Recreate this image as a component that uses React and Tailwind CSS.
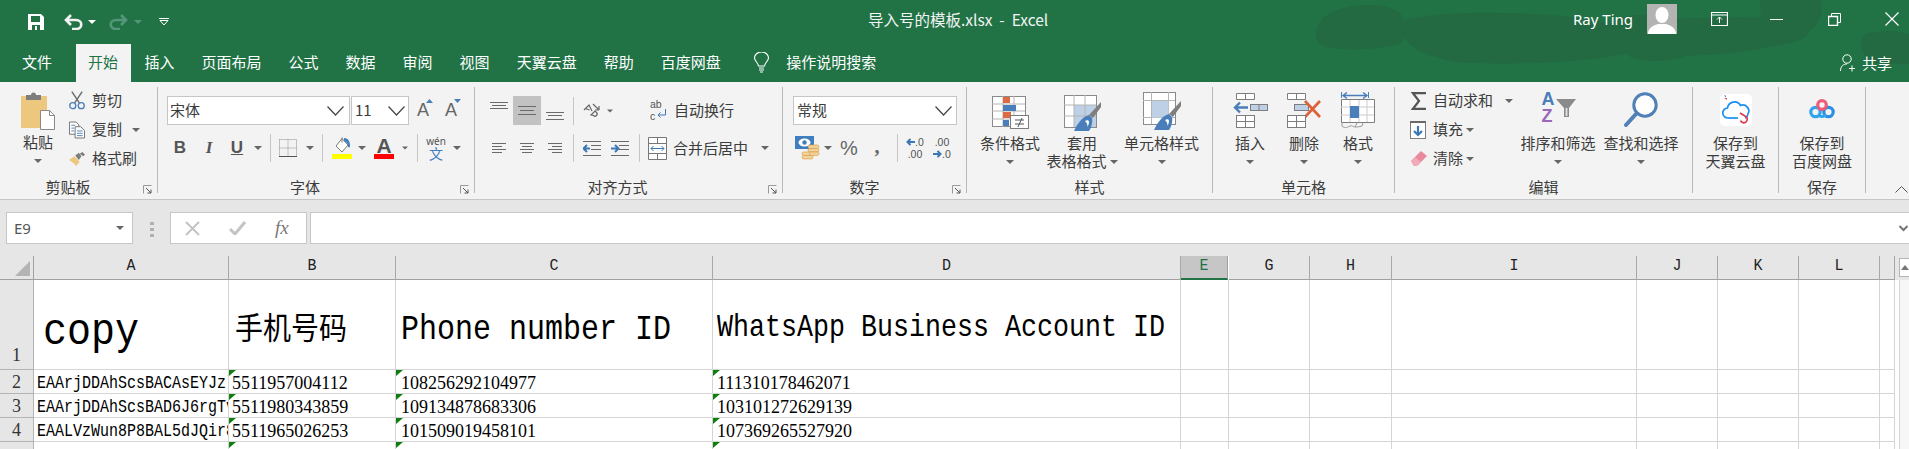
import React from "react";

const Caret = ({ c = "#666666" }) => (
  <svg width="8" height="4" viewBox="0 0 8 4"><path d="M0 0h8L4 4z" fill={c} /></svg>
);
const Chevron = () => (
  <svg width="17" height="10" viewBox="0 0 17 10" fill="none" stroke="#444444" strokeWidth="1.2"><path d="M0.5 0.5L8.5 9L16.5 0.5" /></svg>
);
const Launcher = () => (
  <svg className="absolute right-[5px] bottom-[5px]" width="9" height="9" viewBox="0 0 9 9" fill="none">
    <path d="M0.5 8.5V0.5H8.5" stroke="#9a9a9a" />
    <path d="M3 3L8 8M8 4.5V8H4.5" stroke="#555555" />
  </svg>
);
const VSep = () => <div className="w-px h-[28px] bg-[#c6c6c6]" />;

const Lines = ({ pattern, w = 18 }) => (
  <svg width={w} height="12" viewBox={`0 0 ${w} 12`} stroke="#6a6a6a" strokeWidth="1">
    {pattern.map((p, i) => (
      <line key={i} x1={p[0]} x2={p[1]} y1={p[2] + 0.5} y2={p[2] + 0.5} />
    ))}
  </svg>
);

const Paste = () => (
  <svg width="34" height="38" viewBox="0 0 34 38" className="mt-[10px]">
    <rect x="0" y="4" width="26" height="32" rx="1" fill="#eec77f" />
    <path d="M5 8V3h5a2.5 2.5 0 0 1 5 0h5v5z" fill="#7d7d7d" />
    <path d="M19.5 18.5h9l5 5v14h-14z" fill="#ffffff" stroke="#8a8a8a" />
    <path d="M28.5 18.5v5h5" fill="none" stroke="#8a8a8a" />
  </svg>
);
const Scissors = () => (
  <svg width="17" height="19" viewBox="0 0 17 19" fill="none">
    <path d="M3 0L11 12M14 0L6 12" stroke="#6f6f6f" strokeWidth="1.6" />
    <circle cx="4" cy="15" r="3.2" stroke="#4a7eba" strokeWidth="1.4" />
    <circle cx="13" cy="15" r="3.2" stroke="#4a7eba" strokeWidth="1.4" />
  </svg>
);
const CopyIcon = () => (
  <svg width="17" height="18" viewBox="0 0 17 18" fill="#fff" stroke="#6f6f6f">
    <path d="M0.5 0.5h7l3 3v10h-10z" />
    <path d="M6.5 5.5h6l4 4v8h-10z" />
    <path d="M2.5 4h4M2.5 7h3M2.5 10h3" stroke="#4a7eba" />
    <path d="M8.5 10h6M8.5 12.5h6M8.5 15h6" stroke="#4a7eba" />
  </svg>
);
const Painter = () => (
  <svg width="18" height="16" viewBox="0 0 18 16">
    <path d="M0 9l6-4 6 6-4 5c-2-3-5-5-8-7z" fill="#eec77f" />
    <path d="M7 4l4-3 3 4-3 4z" fill="#7d7d7d" />
    <path d="M12 2l3-2 3 3-2 2z" fill="#7d7d7d" />
  </svg>
);
const Borders = () => (
  <svg width="18" height="18" viewBox="0 0 18 18" fill="none" stroke="#8c8c8c" strokeDasharray="1 1">
    <path d="M0.5 0.5h17v17M0.5 0.5v17M9 0.5v17M0.5 9h17" />
    <path d="M0 17.5h18" stroke="#555555" strokeDasharray="none" />
  </svg>
);
const Bucket = () => (
  <svg width="20" height="17" viewBox="0 0 20 17" fill="none">
    <path d="M4 9L10 1.5L16 8L10 15z" fill="#fff" stroke="#777777" />
    <path d="M10 0.5v5" stroke="#777777" />
    <path d="M12 1c4 0 6 3 6 8 0 2-2 2-2 0 0-3-2-4-4-5z" fill="#3f7fbf" />
  </svg>
);
const Orient = () => (
  <svg width="18" height="18" viewBox="0 0 18 18" fill="none" stroke="#666666" strokeWidth="1.2">
    <path d="M1 8l5-5 3 6M2.5 6.5l4 1.5" />
    <path d="M8 13l4-4 1.5 1.5a2 2 0 0 1-3 3z" />
    <path d="M10 2l6 6M16 8v-4M16 8h-4" />
  </svg>
);
const Indent = ({ flip }) => (
  <svg width="18" height="15" viewBox="0 0 18 15" stroke="#6a6a6a">
    <path d="M0 0.5h18M8 4.5h10M8 8.5h10M0 14.5h18" />
    {flip ? (
      <path d="M0 7.5h7M4 4l3.5 3.5L4 11" stroke="#3c78b5" strokeWidth="2" fill="none" />
    ) : (
      <path d="M7 7.5H1M4 4L0.5 7.5L4 11" stroke="#3c78b5" strokeWidth="2" fill="none" />
    )}
  </svg>
);
const Wrap = () => (
  <div className="relative w-[20px] h-[23px] text-[#555555] text-[10.5px] leading-[11.5px] font-['Liberation_Sans',sans-serif]">
    <div>ab</div>
    <div>c</div>
    <svg className="absolute left-[7px] top-[10px]" width="10" height="10" viewBox="0 0 10 10" fill="none" stroke="#3c78b5"><path d="M8.5 0v6H1M3.5 3.5L1 6l2.5 2.5" /></svg>
  </div>
);
const Merge = () => (
  <svg width="19" height="23" viewBox="0 0 19 23" fill="#fff" stroke="#777777">
    <path d="M0.5 0.5h18v22h-18zM0.5 6.5h18M0.5 16.5h18M9.5 0.5v6M9.5 16.5v6" />
    <path d="M3 11.5h13M5.5 9L3 11.5 5.5 14M13.5 9l2.5 2.5-2.5 2.5" stroke="#3c78b5" fill="none" />
  </svg>
);
const Money = () => (
  <svg width="25" height="24" viewBox="0 0 25 24">
    <rect x="0" y="0" width="19" height="13" fill="#3f7fbf" />
    <ellipse cx="9.5" cy="6.5" rx="6" ry="4" fill="#fff" />
    <circle cx="9.5" cy="6.5" r="2.2" fill="#3f7fbf" />
    <g fill="#f4d39b" stroke="#d8a04f" strokeWidth="0.7">
      <rect x="13" y="9" width="11" height="3.4" rx="1.7" />
      <rect x="13" y="12.5" width="11" height="3.4" rx="1.7" />
      <rect x="13" y="16" width="11" height="3.4" rx="1.7" />
      <rect x="7" y="16" width="8" height="3.4" rx="1.7" />
      <rect x="7" y="19.5" width="11" height="3.4" rx="1.7" />
    </g>
  </svg>
);
const Dec = ({ inc }) => (
  <div className="flex flex-col items-center text-[10.5px] leading-[12px] text-[#555555] font-['Liberation_Sans',sans-serif]">
    {inc ? (
      <>
        <div className="flex items-center"><svg width="9" height="8" viewBox="0 0 9 8"><path d="M9 4H2M4.5 1L1.5 4l3 3" fill="none" stroke="#3c78b5" strokeWidth="2" /></svg>.0</div>
        <div>.00</div>
      </>
    ) : (
      <>
        <div>.00</div>
        <div className="flex items-center"><svg width="9" height="8" viewBox="0 0 9 8"><path d="M0 4h7M4.5 1l3 3-3 3" fill="none" stroke="#3c78b5" strokeWidth="2" /></svg>.0</div>
      </>
    )}
  </div>
);
const CF = () => (
  <svg width="37" height="33" viewBox="0 0 37 33" className="mt-[14px]">
    <rect x="0.5" y="0.5" width="33" height="30" fill="#fff" stroke="#8a8a8a" />
    <path d="M0 8h33M0 15h33M0 23h33M11 0v31M22 0v31" stroke="#b5b5b5" />
    <rect x="11" y="1" width="7" height="6" fill="#dd6a45" />
    <rect x="11" y="9" width="13" height="6" fill="#4a7eba" />
    <rect x="11" y="16" width="8" height="6" fill="#dd6a45" />
    <rect x="11" y="24" width="6" height="6" fill="#4a7eba" />
    <rect x="18.5" y="19.5" width="18" height="13" fill="#fff" stroke="#7d7d7d" />
    <path d="M23 24h9M23 28h9M30 22l-4 9" stroke="#555555" fill="none" />
  </svg>
);
const Brush = () => (
  <>
    <path d="M37 7v5L29 23l-4-3z" fill="#7f7f7f" />
    <path d="M10 36c3-7 8-14 15-16l3 3c1 5-1 10-3 13z" fill="#4a7eba" />
    <path d="M21 26c2-1 4-1 4 1 0 2-1 4-2 5 1-2 0-4-2-6z" fill="#fff" />
  </>
);
const TableFmt = () => (
  <svg width="37" height="36" viewBox="0 0 37 36" className="mt-[13px]">
    <rect x="0.5" y="0.5" width="32" height="32" fill="#fff" stroke="#8a8a8a" />
    <rect x="10" y="10" width="22" height="22" fill="#bdd0e6" />
    <path d="M0 10h32M0 21h32M10 0v32M21 0v32" stroke="#b5b5b5" />
    <Brush />
  </svg>
);
const CellFmt = () => (
  <svg width="38" height="38" viewBox="0 0 38 38" className="mt-[10px]">
    <rect x="0.5" y="0.5" width="32" height="32" fill="#fff" stroke="#8a8a8a" />
    <path d="M0 8.5h32M0 25.5h32M8.5 0v32M25.5 0v32" stroke="#b5b5b5" />
    <rect x="9" y="9" width="16.5" height="16.5" fill="#bdd0e6" />
    <g transform="translate(1 2)"><Brush /></g>
  </svg>
);
const MiniGrid = ({ y }) => (
  <g transform={`translate(3 ${y})`} fill="#fff" stroke="#7d7d7d">
    <rect x="0.5" y="0.5" width="18" height="12" />
    <path d="M0.5 6.5h18M9.5 0.5v12" />
  </g>
);
const Insert = () => (
  <svg width="35" height="35" viewBox="0 0 35 35" className="mt-[11px]">
    <g fill="#fff" stroke="#7d7d7d"><path d="M3.5 0.5h18v6h-18zM12.5 0.5v6" /></g>
    <rect x="17.5" y="11.5" width="17" height="6" fill="#bdd0e6" stroke="#7d7d7d" />
    <path d="M26 11.5v6" stroke="#7d7d7d" />
    <path d="M15 14.5H2M7 9.5l-5 5 5 5" fill="none" stroke="#4a7eba" strokeWidth="2.4" />
    <MiniGrid y={22} />
  </svg>
);
const Delete = () => (
  <svg width="35" height="35" viewBox="0 0 35 35" className="mt-[11px]">
    <g fill="#fff" stroke="#7d7d7d"><path d="M0.5 0.5h18v6h-18zM9.5 0.5v6" /></g>
    <rect x="7.5" y="11.5" width="14" height="6" fill="#bdd0e6" stroke="#7d7d7d" />
    <path d="M18 8l15 16M33 8L18 24" stroke="#dd6238" strokeWidth="2.6" />
    <g transform="translate(-3 0)"><MiniGrid y={22} /></g>
  </svg>
);
const FormatIcon = () => (
  <svg width="34" height="38" viewBox="0 0 34 38" className="mt-[10px]">
    <path d="M2 3.5h24M6 0.5L2 3.5l4 3M22 0.5l4 3-4 3" fill="none" stroke="#4a7eba" strokeWidth="1.4" />
    <path d="M0.5 0v6M27.5 0v6" stroke="#4a7eba" />
    <path d="M0.5 7.5h33v23h-33z" fill="#fff" stroke="#7d7d7d" />
    <path d="M0 15h33M0 23h33M9 8v22M18 8v22M26 8v22" stroke="#cccccc" />
    <rect x="9" y="14" width="9" height="12" fill="#4a7eba" />
    <path d="M1 31v3c3 3 6 1 8 0s3 1 5 1l2-4" fill="none" stroke="#9a9a9a" />
    <path d="M14 35c2 0 4 0 7-1l1-3" fill="none" stroke="#9a9a9a" />
  </svg>
);
const Sigma = () => (
  <svg width="15" height="18" viewBox="0 0 15 18" fill="none" stroke="#555555" strokeWidth="2.2"><path d="M15 1.2H2L8 9l-6 7.8h13" /></svg>
);
const Fill = () => (
  <svg width="17" height="18" viewBox="0 0 17 18">
    <rect x="0.5" y="0.5" width="15" height="17" fill="#fff" stroke="#7d7d7d" />
    <rect x="0" y="0" width="16" height="2" fill="#6a6a6a" />
    <path d="M8 5v9M4 10l4 4 4-4" fill="none" stroke="#3c78b5" strokeWidth="2.2" />
  </svg>
);
const Eraser = () => (
  <svg width="17" height="17" viewBox="0 0 17 17">
    <path d="M1 11L11 1l6 5L7 16H4z" fill="#e88a9c" />
    <path d="M1 11l4-4 6 5-4 4H4z" fill="#efabb7" />
  </svg>
);
const Sort = () => (
  <div className="relative w-[35px] h-[35px] mt-[9px] text-[18px] leading-[17px] font-bold font-['Liberation_Sans',sans-serif]">
    <div className="text-[#4a7eba] pl-[1px]">A</div>
    <div className="text-[#9a68b8] pl-[1px]">Z</div>
    <svg className="absolute left-[15px] top-[8px]" width="20" height="19" viewBox="0 0 20 19">
      <path d="M0 0h20l-7 9v9H8V9z" fill="#8a8a8a" />
      <path d="M10.5 9v8" stroke="#dddddd" strokeWidth="2" />
    </svg>
  </div>
);
const Find = () => (
  <svg width="34" height="35" viewBox="0 0 34 35" className="mt-[10px]" fill="none">
    <circle cx="21" cy="13" r="11.2" fill="#fff" stroke="#4f81b7" strokeWidth="3" />
    <path d="M12 22L2 33" stroke="#4f81b7" strokeWidth="4" strokeLinecap="round" />
  </svg>
);
const Tianyi = () => (
  <svg width="32" height="32" viewBox="0 0 32 32" className="mt-[12px]" fill="none">
    <rect width="32" height="32" rx="5" fill="#ffffff" />
    <path d="M4 4l3 0 0 2z" fill="#d9534f" />
    <path d="M4 1.5l2 0 0 2z" fill="#2f7fd8" />
    <path d="M8 24a5 5 0 0 1-.5-10 7 7 0 0 1 13-2.5A6 6 0 0 1 28 20a5 5 0 0 1-3 4" stroke="#1a8ff0" strokeWidth="1.7" />
    <path d="M8 24h10" stroke="#1a8ff0" strokeWidth="1.7" />
    <path d="M20 19l5 3a3.5 3.5 0 1 1-4.5 4.5" stroke="#e0354b" strokeWidth="1.7" />
  </svg>
);
const Baidu = () => (
  <svg width="26" height="20" viewBox="0 0 26 20" className="mt-[17px]" fill="none">
    <circle cx="6.5" cy="13" r="4.7" stroke="#31a5ec" strokeWidth="3.2" />
    <circle cx="19.5" cy="13" r="4.7" stroke="#2b8fe6" strokeWidth="3.2" />
    <circle cx="13" cy="6" r="4.3" stroke="#ef5b78" strokeWidth="3.2" />
    <path d="M9 16c2 2 6 2 8 0" stroke="#31a5ec" strokeWidth="3" />
  </svg>
);

const Small = ({ icon, text, caret, iconW = "w-[16px]", ml = "ml-[7px]" }) => (
  <div className="flex items-center h-[29px] whitespace-nowrap">
    <div className={`flex justify-center ${iconW}`}>{icon}</div>
    <span className={ml}>{text}</span>
    {caret}
  </div>
);
const Big = ({ w, icon, l1, l2, caret = true }) => (
  <div className={`flex flex-col items-center ${w}`}>
    <div className="h-[51px]">{icon}</div>
    <div className="h-[19px] leading-[19px] whitespace-nowrap">{l1}</div>
    <div className="h-[19px] flex items-center whitespace-nowrap">
      {l2 && <span>{l2}</span>}
      {caret && <span className={l2 ? "ml-[3px] flex" : "flex"}><Caret /></span>}
    </div>
  </div>
);
const Group = ({ w, label, pr = "", launcher, children }) => (
  <>
    <div className={`relative flex flex-col shrink-0 ${w}`}>
      <div className="h-[95px] flex">{children}</div>
      <div className={`h-[20px] flex items-center justify-center ${pr}`}>{label}</div>
      {launcher && <Launcher />}
    </div>
    <div className="w-px h-[106px] mt-[5px] bg-[#b8b8b8] shrink-0" />
  </>
);
const Slot = ({ w, children }) => <div className={`flex justify-center items-center h-full shrink-0 ${w}`}>{children}</div>;

const tabs = ["插入", "页面布局", "公式", "数据", "审阅", "视图", "天翼云盘", "帮助", "百度网盘"];

const Header = () => (
  <div className="relative h-[82px] bg-[#217346] text-white overflow-hidden">
    <svg className="absolute left-[1290px] top-0" width="619" height="82" viewBox="0 0 619 82" fill="#236a43">
      <path d="M30 22C40 5 85 0 105 10c15 6 12 30 5 34-20 6-70 8-80 0-6-6-6-14 0-22z" />
      <path d="M115 20c40-12 170-8 205 4 10-10 40-12 60-6 20 2 110-4 135 0 10 12 5 22-20 26-30 6-50 10-100 12-20 8-50 6-60-2-40 8-110 12-170 8-30-6-60-16-50-42z" />
      <path d="M470 0h60c5 12 0 30-25 38-15 2-32-6-34-20z" />
      <path d="M575 34c12-4 30-4 44 0v30h-30c-14-2-24-20-14-30z" />
    </svg>
    <div className="relative flex items-center h-[44px] pl-[28px]">
      <svg width="16" height="16" viewBox="0 0 16 16"><path d="M0 0h13l3 3v13H0z" fill="#fff" /><rect x="3" y="2" width="9" height="6" fill="#217346" /><rect x="4" y="11" width="8" height="5" fill="#217346" /><rect x="7" y="12" width="2" height="4" fill="#fff" /></svg>
      <svg className="ml-[20px]" width="19" height="16" viewBox="0 0 19 16" fill="none" stroke="#f2f2f2" strokeWidth="2.6"><path d="M7 1L2 6l5 5M2 6h10c7 0 7 9 0 9H8" /></svg>
      <span className="ml-[5px] flex"><Caret c="#ffffff" /></span>
      <svg className="ml-[13px]" width="19" height="16" viewBox="0 0 19 16" fill="none" stroke="#55957a" strokeWidth="2.6"><path d="M12 1l5 5-5 5M17 6H7c-7 0-7 9 0 9h4" /></svg>
      <span className="ml-[6px] flex"><Caret c="#55957a" /></span>
      <svg className="ml-[17px]" width="10" height="8" viewBox="0 0 10 8" fill="none" stroke="#fff"><path d="M0 0.5h10M1 2.5h8L5 7z" /></svg>
      <div className="absolute left-[868px] top-0 h-full flex items-center pb-[4px] text-[15.5px] whitespace-pre text-[#f4f4f4]">导入号的模板.xlsx  -  Excel</div>
      <div className="ml-auto flex items-center pr-[10px] pb-[6px]">
        <span className="w-[60px] text-[15px] font-['Noto_Sans',sans-serif] whitespace-nowrap">Ray Ting</span>
        <div className="ml-[14px] w-[30px] h-[30px] bg-[#b3b3b3] overflow-hidden">
          <svg width="30" height="30" viewBox="0 0 30 30" fill="#fff"><ellipse cx="15" cy="11" rx="6.5" ry="8" /><path d="M1 30c0-7 7-9 10-10h8c3 1 10 3 10 10z" /></svg>
        </div>
        <svg className="ml-[34px]" width="17" height="14" viewBox="0 0 17 14" fill="none" stroke="#fff"><path d="M0.5 0.5h16v13h-16zM0.5 3h16" strokeWidth="1.2" /><path d="M8.5 11V5M6 7.5L8.5 5 11 7.5" /></svg>
        <div className="ml-[42px] w-[13px] h-px bg-white" />
        <svg className="ml-[45px]" width="13" height="13" viewBox="0 0 13 13" fill="none" stroke="#fff"><path d="M3.5 3V0.5h9v9H10" /><path d="M0.5 3.5h9v9h-9z" strokeWidth="1.4" /></svg>
        <svg className="ml-[44px]" width="14" height="14" viewBox="0 0 14 14" stroke="#fff" strokeWidth="1.2"><path d="M0.5 0.5l13 13M13.5 0.5l-13 13" /></svg>
      </div>
    </div>
    <div className="relative flex h-[38px] pl-[8px] text-[15px]">
      <div className="pl-[14px] pr-[24px] pb-[2px] flex items-center">文件</div>
      <div className="pl-[12px] pr-[13px] pb-[2px] flex items-center bg-[#f3f3f3] text-[#217346]">开始</div>
      {tabs.map((t) => (
        <div key={t} className="px-[13.5px] pb-[2px] flex items-center">{t}</div>
      ))}
      <svg className="ml-[20px] mt-[8px]" width="15" height="21" viewBox="0 0 15 21" fill="none" stroke="#fff" strokeWidth="1.1"><path d="M4.5 14c0-3-4-5-4-8a7 6 0 0 1 14 0c0 3-4 5-4 8z" /><path d="M5 16h5M5 18h5M6 20h3" /></svg>
      <div className="ml-[17px] pb-[2px] flex items-center">操作说明搜索</div>
      <div className="ml-auto pr-[17px] flex items-center">
        <svg width="16" height="18" viewBox="0 0 16 18" fill="none" stroke="#fff"><circle cx="7" cy="5" r="4.2" /><path d="M0.5 17c0-5 3-7 6.5-7" /><path d="M12 11.5v6M9 14.5h6" /></svg>
        <span className="ml-[6px]">共享</span>
      </div>
    </div>
  </div>
);

function TextA({ up }) {
  return (
    <div className="relative text-[#666666] text-[18px] font-['Liberation_Sans',sans-serif]">
      A
      <svg className="absolute -right-[4px] top-[2px]" width="7" height="4" viewBox="0 0 7 4">
        <path d={up ? "M0 4h7L3.5 0z" : "M0 0h7L3.5 4z"} fill="#4a7eba" />
      </svg>
    </div>
  );
}

const Ribbon = () => (
  <div className="relative flex h-[118px] bg-[#f3f3f3] border-b border-[#c6c6c6] text-[15px] text-[#3c3c3c]">
    <Group w="w-[157px]" label="剪贴板" pr="pr-[21px]" launcher>
      <div className="ml-[15px] w-[46px] flex flex-col items-center shrink-0">
        <div className="h-[50px]"><Paste /></div>
        <div className="h-[19px] leading-[19px]">粘贴</div>
        <div className="h-[19px] flex items-center"><Caret /></div>
      </div>
      <div className="ml-[8px] pt-[4px]">
        <Small icon={<Scissors />} text="剪切" />
        <Small icon={<CopyIcon />} text="复制" caret={<span className="ml-[10px] flex"><Caret /></span>} />
        <Small icon={<Painter />} text="格式刷" />
      </div>
    </Group>

    <Group w="w-[316px]" label="字体" pr="pr-[22px]" launcher>
      <div className="flex flex-col pt-[14px] pl-[9px]">
        <div className="flex h-[29px]">
          <div className="w-[183px] h-full bg-white border border-[#c6c6c6] flex items-center justify-between pl-[2px] pr-[5px]">宋体<Chevron /></div>
          <div className="ml-px w-[58px] h-full bg-white border border-[#c6c6c6] flex items-center justify-between pl-[3px] pr-[3px]">11<Chevron /></div>
          <Slot w="w-[28px]"><TextA up /></Slot>
          <Slot w="w-[28px]"><TextA /></Slot>
        </div>
        <div className="flex h-[28px] mt-[9px] -ml-[1px] text-[#555555]">
          <Slot w="w-[28px]"><b className="text-[17px] font-['Liberation_Sans',sans-serif]">B</b></Slot>
          <Slot w="w-[30px]"><i className="text-[17px] font-['Liberation_Serif',serif] font-bold">I</i></Slot>
          <Slot w="w-[26px]"><span className="text-[17px] underline font-bold font-['Liberation_Sans',sans-serif]">U</span></Slot>
          <Slot w="w-[16px]"><Caret /></Slot>
          <Slot w="w-[8px]"><VSep /></Slot>
          <Slot w="w-[28px]"><Borders /></Slot>
          <Slot w="w-[16px]"><Caret /></Slot>
          <Slot w="w-[8px]"><VSep /></Slot>
          <Slot w="w-[32px]">
            <div className="flex flex-col items-center"><Bucket /><div className="w-[20px] h-[5px] bg-[#ffff00]" /></div>
          </Slot>
          <Slot w="w-[8px]"><Caret /></Slot>
          <Slot w="w-[36px]">
            <div className="flex flex-col items-center"><span className="text-[21px] leading-[17px] font-bold font-['Liberation_Sans',sans-serif]">A</span><div className="w-[20px] h-[5px] bg-[#ff0000]" /></div>
          </Slot>
          <Slot w="w-[6px]"><Caret /></Slot>
          <Slot w="w-[18px]"><VSep /></Slot>
          <Slot w="w-[20px]">
            <div className="flex flex-col items-center leading-none"><span className="text-[10px] font-['Noto_Sans',sans-serif]">wén</span><span className="text-[14px] text-[#3f7fbf]">文</span></div>
          </Slot>
          <Slot w="w-[22px]"><Caret /></Slot>
        </div>
      </div>
    </Group>

    <Group w="w-[307px]" label="对齐方式" pr="pr-[22px]" launcher>
      <div className="flex flex-col pt-[14px] pl-[10px]">
        <div className="flex h-[29px]">
          <Slot w="w-[28px]"><div className="-mt-[12px] flex"><Lines pattern={[[0, 18, 3], [2, 16, 6], [0, 18, 9]]} /></div></Slot>
          <Slot w="w-[28px] bg-[#c2c2c2]"><Lines pattern={[[0, 18, 1], [2, 16, 5], [0, 18, 9]]} /></Slot>
          <Slot w="w-[28px]"><div className="mt-[10px] flex"><Lines pattern={[[0, 18, 2], [2, 16, 5], [0, 18, 9]]} /></div></Slot>
          <Slot w="w-[8px]"><VSep /></Slot>
          <Slot w="w-[30px]"><Orient /></Slot>
          <Slot w="w-[6px]"><Caret /></Slot>
          <Slot w="w-[35px]" />
          <Slot w="w-[24px]"><Wrap /></Slot>
          <span className="ml-[2px] h-full flex items-center whitespace-nowrap">自动换行</span>
        </div>
        <div className="flex h-[28px] mt-[9px]">
          <Slot w="w-[28px]"><Lines w={14} pattern={[[0, 14, 1], [0, 10, 4], [0, 14, 7], [0, 10, 10]]} /></Slot>
          <Slot w="w-[28px]"><Lines w={14} pattern={[[0, 14, 1], [2, 12, 4], [0, 14, 7], [2, 12, 10]]} /></Slot>
          <Slot w="w-[28px]"><Lines w={14} pattern={[[0, 14, 1], [4, 14, 4], [0, 14, 7], [4, 14, 10]]} /></Slot>
          <Slot w="w-[8px]"><VSep /></Slot>
          <Slot w="w-[30px]"><Indent /></Slot>
          <Slot w="w-[26px]"><Indent flip /></Slot>
          <Slot w="w-[12px]"><VSep /></Slot>
          <Slot w="w-[25px]"><Merge /></Slot>
          <span className="ml-[3px] h-full flex items-center whitespace-nowrap">合并后居中</span>
          <span className="ml-[13px] h-full flex items-center"><Caret /></span>
        </div>
      </div>
    </Group>

    <Group w="w-[183px]" label="数字" pr="pr-[20px]" launcher>
      <div className="flex flex-col pt-[14px] pl-[10px]">
        <div className="w-[164px] h-[29px] bg-white border border-[#c6c6c6] flex items-center justify-between pl-[3px] pr-[4px]">常规<Chevron /></div>
        <div className="flex h-[28px] mt-[9px] text-[#666666]">
          <Slot w="w-[28px]"><Money /></Slot>
          <Slot w="w-[14px]"><Caret /></Slot>
          <Slot w="w-[28px]"><span className="text-[20px] font-['Liberation_Sans',sans-serif]">%</span></Slot>
          <Slot w="w-[28px]"><b className="text-[20px] font-['Liberation_Serif',serif] -mt-[4px]">,</b></Slot>
          <Slot w="w-[12px]"><VSep /></Slot>
          <Slot w="w-[24px]"><Dec inc /></Slot>
          <div className="w-[3px]" />
          <Slot w="w-[24px]"><Dec /></Slot>
        </div>
      </div>
    </Group>

    <Group w="w-[245px]" label="样式">
      <Big w="w-[86px]" icon={<CF />} l1="条件格式" />
      <Big w="w-[58px]" icon={<TableFmt />} l1="套用" l2="表格格式" />
      <Big w="w-[101px]" icon={<CellFmt />} l1="单元格样式" />
    </Group>

    <Group w="w-[181px]" label="单元格">
      <div className="w-[10px]" />
      <Big w="w-[54px]" icon={<Insert />} l1="插入" />
      <Big w="w-[54px]" icon={<Delete />} l1="删除" />
      <Big w="w-[54px]" icon={<FormatIcon />} l1="格式" />
    </Group>

    <Group w="w-[297px]" label="编辑">
      <div className="ml-[13px] pt-[4px] w-[108px] shrink-0">
        <Small icon={<Sigma />} text="自动求和" iconW="w-[20px]" ml="ml-[5px]" caret={<span className="ml-[12px] flex"><Caret /></span>} />
        <Small icon={<Fill />} text="填充" iconW="w-[20px]" ml="ml-[5px]" caret={<span className="ml-[3px] flex"><Caret /></span>} />
        <Small icon={<Eraser />} text="清除" iconW="w-[20px]" ml="ml-[5px]" caret={<span className="ml-[3px] flex"><Caret /></span>} />
      </div>
      <Big w="w-[84px]" icon={<Sort />} l1="排序和筛选" />
      <Big w="w-[82px]" icon={<Find />} l1="查找和选择" />
    </Group>

    <Group w="w-[85px]" label="">
      <Big w="w-full" icon={<Tianyi />} l1="保存到" l2="天翼云盘" caret={false} />
    </Group>
    <Group w="w-[86px]" label="保存">
      <Big w="w-full" icon={<Baidu />} l1="保存到" l2="百度网盘" caret={false} />
    </Group>
    <svg className="absolute right-[1px] bottom-[6px]" width="13" height="7" viewBox="0 0 13 7" fill="none" stroke="#555555"><path d="M0.5 6.5l6-6 6 6" /></svg>
  </div>
);

const FormulaBar = () => (
  <div className="h-[56px] bg-[#e6e6e6] pt-[12px] flex text-[#555555]">
    <div className="ml-[6px] w-[127px] h-[32px] bg-white border border-[#c6c6c6] flex items-center justify-between pl-[7px] pr-[8px] text-[15px] font-['Noto_Sans',sans-serif]">E9<Caret /></div>
    <div className="ml-[16px] w-[5px] flex flex-col gap-[3px] pt-[10px] items-center">
      <i className="w-[4px] h-[3px] bg-[#b0b0b0]" /><i className="w-[4px] h-[3px] bg-[#b0b0b0]" /><i className="w-[4px] h-[3px] bg-[#b0b0b0]" />
    </div>
    <div className="ml-[16px] w-[137px] h-[32px] bg-white border border-[#c6c6c6] flex items-center">
      <svg className="ml-[14px]" width="15" height="15" viewBox="0 0 15 15" stroke="#c4c4c4" strokeWidth="2"><path d="M1 1l13 13M14 1L1 14" /></svg>
      <svg className="ml-[29px]" width="17" height="14" viewBox="0 0 17 14" fill="none" stroke="#c4c4c4" strokeWidth="3"><path d="M1 8l5 5L16 1" /></svg>
      <span className="ml-[29px] text-[19px] italic text-[#777777] font-['Liberation_Serif',serif]">fx</span>
    </div>
    <div className="ml-[3px] flex-1 h-[32px] bg-white border-l border-y border-[#c6c6c6] flex items-center justify-end pr-[1px]">
      <svg width="9" height="7" viewBox="0 0 9 7" fill="none" stroke="#777777" strokeWidth="2"><path d="M0.5 1l4 4 4-4" /></svg>
    </div>
  </div>
);

const HEAD = ["A", "B", "C", "D", "E", "G", "H", "I", "J", "K", "L", ""];
const ROWS = [
  ["EAArjDDAhScsBACAsEYJzl", "5511957004112", "108256292104977", "111310178462071"],
  ["EAArjDDAhScsBAD6J6rgTv", "5511980343859", "109134878683306", "103101272629139"],
  ["EAALVzWun8P8BAL5dJQir8", "5511965026253", "101509019458101", "107369265527920"],
  ["", "", "", ""],
];
const Tri = () => <div className="absolute left-0 top-0 w-[7px] h-[6px] bg-[#0f7d0f] [clip-path:polygon(0_0,100%_0,0_100%)]" />;
const cell = "relative border-r border-b border-[#d4d4d4] overflow-hidden";
const rowHead = "flex justify-center border-r border-b border-[#b4b4b4] bg-[#e6e6e6] text-[18px] font-['Liberation_Serif',serif] text-[#333333]";
const num = "flex items-center pt-[4px] text-[18px] font-['Liberation_Serif',serif]";

const Sheet = () => (
  <div className="flex h-[193px] bg-white overflow-hidden">
    <div className="w-[1895px] shrink-0 grid grid-cols-[34px_195px_167px_317px_468px_48px_81px_82px_245px_81px_81px_81px_15px] grid-rows-[24px_90px_24px_24px_24px_24px] font-['Liberation_Mono',monospace] text-black">
      <div className="bg-[#e6e6e6] border-b border-r border-[#a0a0a0] relative">
        <div className="absolute left-[15px] top-[5px] w-[15px] h-[15px] bg-[#b4b4b4] [clip-path:polygon(100%_0,100%_100%,0_100%)]" />
      </div>
      {HEAD.map((h) =>
        h === "E" ? (
          <div key="E" className="bg-[#c6c6c6] border-b-2 border-[#217346] border-r border-r-[#a0a0a0] flex items-center justify-center text-[#217346] mr-px">
            <span className="text-[15px] scale-y-[1.15]">E</span>
          </div>
        ) : (
          <div key={h || "end"} className="bg-[#e6e6e6] border-b border-r border-[#a8a8a8] border-b-[#a0a0a0] flex items-center justify-center text-[#222222]">
            <span className="text-[15px] scale-y-[1.15]">{h}</span>
          </div>
        )
      )}

      <div className={`${rowHead} items-end`}>1</div>
      <div className={`${cell} flex items-end pl-[9px] pb-[16px] whitespace-nowrap`}>
        <span className="text-[40px] leading-none scale-y-[1.1]">copy</span>
      </div>
      <div className={`${cell} flex items-center pl-[6px] pt-[3px] whitespace-nowrap`}>
        <span className="text-[28px] leading-none scale-y-[1.1] font-['Noto_Sans_CJK_SC',sans-serif]">手机号码</span>
      </div>
      <div className={`${cell} flex items-center pl-[5px] pt-[10px] whitespace-nowrap`}>
        <span className="text-[30px] leading-none scale-y-[1.15]">Phone number ID</span>
      </div>
      <div className={`${cell} flex items-center pl-[4px] pt-[8px] whitespace-nowrap`}>
        <span className="text-[26.67px] leading-none scale-y-[1.15]">WhatsApp Business Account ID</span>
      </div>
      {HEAD.slice(4).map((h) => <div key={h || "end"} className={cell} />)}

      {ROWS.map((r, i) => (
        <React.Fragment key={i}>
          <div className={`${rowHead} items-center pt-[2px]`}>{i < 3 ? i + 2 : ""}</div>
          <div className={`${cell} pl-[3px] pt-[5px] flex items-center whitespace-nowrap`}>
            <span className="text-[15px] scale-y-[1.2]">{r[0]}</span>
          </div>
          <div className={`${cell} pl-[3px] ${num}`}><Tri />{r[1]}</div>
          <div className={`${cell} pl-[5px] ${num}`}><Tri />{r[2]}</div>
          <div className={`${cell} pl-[4px] ${num}`}><Tri />{r[3]}</div>
          {HEAD.slice(4).map((h) => <div key={h || "end"} className={cell} />)}
        </React.Fragment>
      ))}
    </div>
    <div className="flex-1 flex flex-col bg-white">
      <div className="h-[24px] bg-[#e6e6e6] pl-[4px] pt-[2px]">
        <div className="h-[19px] border border-[#b4b4b4] border-r-0 bg-white flex items-center justify-center">
          <svg width="8" height="5" viewBox="0 0 8 5"><path d="M0 5h8L4 0z" fill="#777777" /></svg>
        </div>
      </div>
      <div className="flex-1 ml-[4px] bg-[#f7f7f7] border-l border-[#d4d4d4]" />
    </div>
  </div>
);

export default function App() {
  return (
    <div className="w-[1909px] h-[449px] overflow-hidden font-['Noto_Sans_CJK_SC','Noto_Sans',sans-serif] leading-normal">
      <Header />
      <Ribbon />
      <FormulaBar />
      <Sheet />
    </div>
  );
}
